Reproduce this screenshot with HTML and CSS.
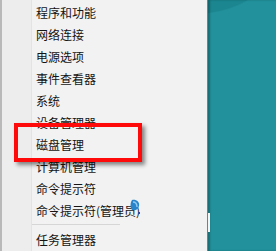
FILE: index.html
```html
<!DOCTYPE html>
<html lang="zh-CN">
<head>
  <meta charset="UTF-8" />
  <title>Win+X 菜单</title>
  <link rel="stylesheet" href="styles.css">
</head>
<body>
  <div class="screen">
    <div class="menu">
      <ul class="items">
        <li>程序和功能</li>
        <li>网络连接</li>
        <li>电源选项</li>
        <li>事件查看器</li>
        <li>系统</li>
        <li>设备管理器</li>
        <li>磁盘管理</li>
        <li>计算机管理</li>
        <li>命令提示符</li>
        <li>命令提示符(管理员)</li>
        <li class="sep"></li>
        <li>任务管理器</li>
      </ul>
      <div class="highlight"></div>
      <svg class="cursor" width="12" height="16" viewBox="0 0 12 16">
        <path d="M3 1 C7 0 11 3 10 7 C9 11 6 12 3 11 C1 9 1 4 3 1 Z" fill="#2a84c9"/>
        <path d="M4 3 C7 3 8 5 8 8" stroke="#8fcaf0" stroke-width="1.4" fill="none"/>
        <rect x="9" y="13" width="2" height="2" fill="#2c4a9c"/>
      </svg>
    </div>
    <div class="desktop">
      <div class="notch"></div>
    </div>
  </div>
</body>
</html>
```

FILE: styles.css
```css
body {
  margin: 0;
  font-family: "Noto Sans CJK SC", "Noto Sans", sans-serif;
  background: #22919b;
}
.screen {
  display: flex;
  width: 276px;
  height: 251px;
  overflow: hidden;
}
.menu {
  position: relative;
  width: 205px;
  height: 251px;
  border-left: 2px solid #b9b9b9;
  border-right: 1px solid #7d7d7d;
  background: linear-gradient(to right, #ededed 29px, #e3e3e3 29px 30px, #f2f2f2 30px);
}
.items {
  list-style: none;
  margin: 0;
  padding: 2px 0 0 0;
}
.items li {
  height: 22px;
  line-height: 22px;
  padding-left: 34px;
  font-size: 12px;
  color: #141414;
  white-space: nowrap;
}
.items li.sep {
  height: 1px;
  width: 88px;
  margin: 2px 0 4px 30px;
  padding: 0;
  background: #d6d6d6;
}
.highlight {
  position: absolute;
  left: 12px;
  top: 123px;
  width: 120px;
  height: 31px;
  border: 4px solid #ff0a0a;
  box-shadow: 3px 3px 4px rgba(0, 0, 0, 0.45);
}
.cursor {
  position: absolute;
  left: 127px;
  top: 199px;
}
.desktop {
  position: relative;
  flex: 1;
  background: radial-gradient(80px 45px at -18px -30px, #1b8690 97%, transparent 100%), #22919b;
  box-shadow: inset 2px 0 2px rgba(0, 0, 0, 0.25);
}
.notch {
  position: absolute;
  left: 0;
  top: 213px;
  width: 2px;
  height: 19px;
  background: #f4f4f4;
}
```
